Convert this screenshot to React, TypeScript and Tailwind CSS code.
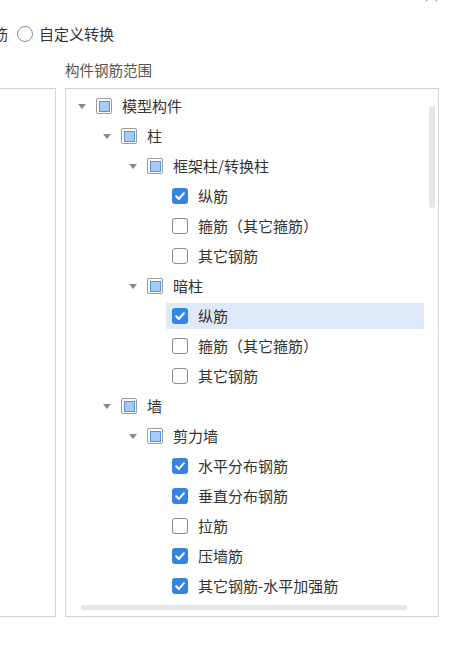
import React from "react";

type Check = "checked" | "unchecked" | "partial";

interface TreeRow {
	label: string;
	depth: 0 | 1 | 2 | 3;
	state: Check;
	expandable?: boolean;
	selected?: boolean;
}

const rows: TreeRow[] = [
	{ label: "模型构件", depth: 0, state: "partial", expandable: true },
	{ label: "柱", depth: 1, state: "partial", expandable: true },
	{ label: "框架柱/转换柱", depth: 2, state: "partial", expandable: true },
	{ label: "纵筋", depth: 3, state: "checked" },
	{ label: "箍筋（其它箍筋）", depth: 3, state: "unchecked" },
	{ label: "其它钢筋", depth: 3, state: "unchecked" },
	{ label: "暗柱", depth: 2, state: "partial", expandable: true },
	{ label: "纵筋", depth: 3, state: "checked", selected: true },
	{ label: "箍筋（其它箍筋）", depth: 3, state: "unchecked" },
	{ label: "其它钢筋", depth: 3, state: "unchecked" },
	{ label: "墙", depth: 1, state: "partial", expandable: true },
	{ label: "剪力墙", depth: 2, state: "partial", expandable: true },
	{ label: "水平分布钢筋", depth: 3, state: "checked" },
	{ label: "垂直分布钢筋", depth: 3, state: "checked" },
	{ label: "拉筋", depth: 3, state: "unchecked" },
	{ label: "压墙筋", depth: 3, state: "checked" },
	{ label: "其它钢筋-水平加强筋", depth: 3, state: "checked" },
];

const indent: Record<number, string> = {
	0: "pl-0",
	1: "pl-[25px]",
	2: "pl-[51px]",
	3: "pl-[76px]",
};

function CheckBox({ state }: { state: Check }) {
	if (state === "checked") {
		return (
			<span className="w-4 h-4 rounded-[3px] bg-[#3584e4] flex items-center justify-center shrink-0">
				<svg width="12" height="12" viewBox="0 0 12 12">
					<path
						d="M2.2 6.3 L4.9 8.9 L9.8 3.4"
						fill="none"
						stroke="white"
						strokeWidth="2.1"
						strokeLinecap="round"
						strokeLinejoin="round"
					/>
				</svg>
			</span>
		);
	}
	if (state === "partial") {
		return (
			<span className="w-4 h-4 rounded-[2px] border border-[#9a9a9a] bg-white p-[1.5px] flex shrink-0">
				<span className="flex-1 border border-[#4f93e6] bg-[#a7cbf9]" />
			</span>
		);
	}
	return (
		<span className="w-4 h-4 rounded-[3px] border border-[#8c8c8c] bg-white shrink-0" />
	);
}

function Arrow() {
	return (
		<svg width="8" height="5" viewBox="0 0 8 5">
			<path d="M0 0 L8 0 L4 5 Z" fill="#8a8a8a" />
		</svg>
	);
}

export default function App() {
	return (
		<div
			className="w-[450px] h-[657px] bg-white overflow-hidden text-[#333] flex flex-col"
			style={{ fontFamily: '"Noto Sans CJK SC", "Noto Sans", sans-serif' }}
		>
			<div className="h-[2px] flex justify-end pr-[12px] overflow-visible">
				<svg width="13" height="13" viewBox="0 0 13 13" className="-mt-[11px] shrink-0">
					<path d="M1 1 L12 12 M12 1 L1 12" stroke="#9a9a9a" strokeWidth="1.2" />
				</svg>
			</div>

			<div className="mt-[22px] h-[20px] flex items-center text-[15px] leading-[20px] whitespace-nowrap">
				<span className="-ml-[7px]">筋</span>
				<span className="ml-[9px] w-4 h-4 rounded-full border border-[#8c8c8c] shrink-0" />
				<span className="ml-[6px]">自定义转换</span>
			</div>

			<div className="mt-[16px] h-[20px] pl-[65px] text-[14.5px] leading-[20px] text-[#555]">
				构件钢筋范围
			</div>

			<div className="mt-[8px] h-[529px] flex gap-[9px]">
				<div className="w-[60px] -ml-[4px] border border-[#d4d4d4]" />

				<div className="w-[374px] border border-[#d4d4d4] flex flex-col">
					<div className="flex flex-1 min-h-0">
						<div className="flex-1 pt-[2px] pl-[8px] flex flex-col">
							{rows.map((row, i) => (
								<div
									key={i}
									className={`h-[30px] flex items-center ${indent[row.depth]}`}
								>
									<div className="w-4 flex justify-center shrink-0">
										{row.expandable && <Arrow />}
									</div>
									<div
										className={`flex-1 h-[26px] flex items-center pl-[6px] ${
											row.selected ? "bg-[#dde8f8]" : ""
										}`}
									>
										<CheckBox state={row.state} />
										<span className="ml-[10px] text-[15px] leading-[20px] whitespace-nowrap">
											{row.label}
										</span>
									</div>
								</div>
							))}
						</div>
						<div className="w-[14px] shrink-0 pt-[17px] flex justify-center pl-[1px]">
							<div className="w-[6px] h-[102px] rounded-full bg-[#e6e6e6]" />
						</div>
					</div>
					<div className="h-[15px] pl-[15px] pr-[31px] pt-[4px]">
						<div className="h-[5px] rounded-full bg-[#e6e6e6]" />
					</div>
				</div>
			</div>
		</div>
	);
}
